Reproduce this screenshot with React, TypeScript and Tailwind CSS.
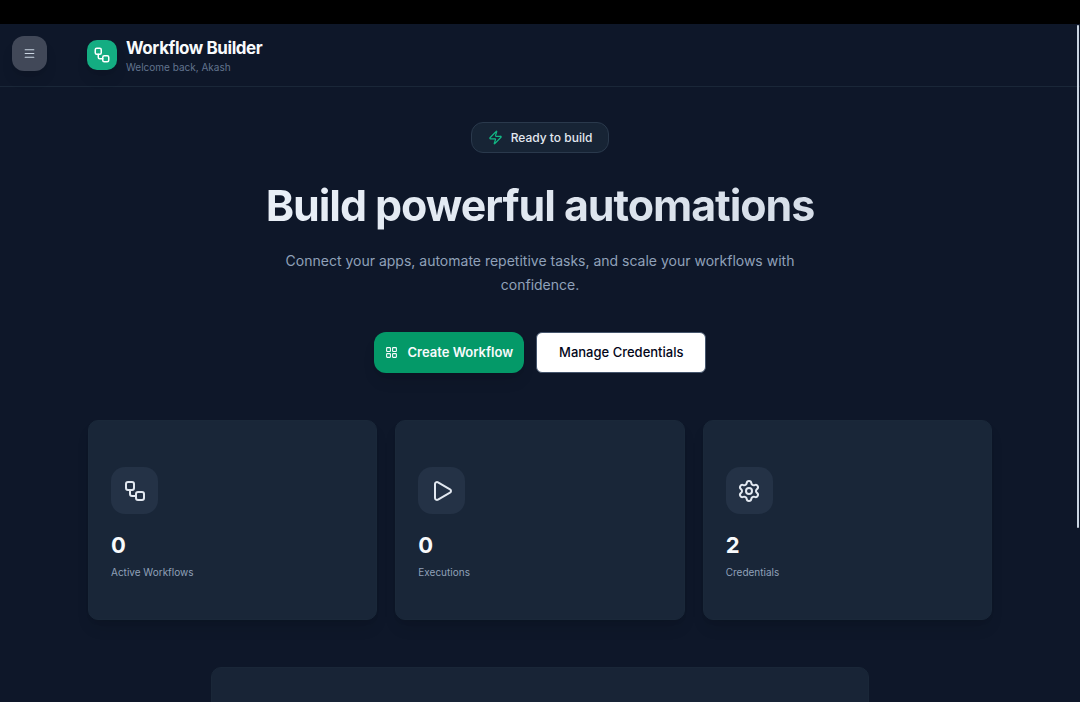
import { LayoutGrid, Menu, Play, Settings, Workflow, Zap } from "lucide-react";
import type { LucideIcon } from "lucide-react";

type Stat = {
  label: string;
  value: number;
  icon: LucideIcon;
};

const stats: Stat[] = [
  { label: "Active Workflows", value: 0, icon: Workflow },
  { label: "Executions", value: 0, icon: Play },
  { label: "Credentials", value: 2, icon: Settings },
];

function StatCard({ stat }: { stat: Stat }) {
  const Icon = stat.icon;

  return (
    <li className="rounded-[10px] border border-[#1a2839] bg-[#192638] px-[22px] pt-[46px] pb-[39px] shadow-lg">
      <div className="flex size-[47px] items-center justify-center rounded-[14px] bg-[#243246] text-slate-200">
        <Icon size={24} aria-hidden="true" />
      </div>
      <p className="mt-[17px] text-[22px] leading-7 font-bold text-slate-50">{stat.value}</p>
      <p className="mt-[5px] text-[10px] leading-4 text-slate-400">{stat.label}</p>
    </li>
  );
}

function Header() {
  return (
    <header className="flex h-[63px] shrink-0 items-start border-b border-[#1a2738] pt-3 pr-[88px] pl-3">
      <button
        type="button"
        aria-label="Open menu"
        className="flex size-[35px] cursor-pointer items-center justify-center rounded-xl bg-[#414858] text-slate-300 shadow-lg"
      >
        <Menu size={13} aria-hidden="true" />
      </button>
      <div className="ml-10 flex items-center gap-[9px]">
        <div className="flex size-[30px] items-center justify-center rounded-[10px] bg-[#14ad82] text-white shadow-lg">
          <Workflow size={18} aria-hidden="true" />
        </div>
        <div>
          <p className="text-[17px] leading-6 font-bold tracking-tight text-slate-50">Workflow Builder</p>
          <p className="text-[10px] leading-[14px] text-slate-500">Welcome back, Akash</p>
        </div>
      </div>
    </header>
  );
}

function Hero() {
  return (
    <section className="flex flex-col items-center text-center" aria-labelledby="hero-title">
      <div className="flex h-[31px] items-center gap-2 rounded-xl border border-[#2a394c] bg-[#172435] px-4 text-[12px] font-medium text-slate-200">
        <Zap size={15} className="text-[#12b985]" aria-hidden="true" />
        Ready to build
      </div>
      <h1
        id="hero-title"
        className="mt-6 bg-linear-to-r from-[#e9eff7] to-[#d6dee8] bg-clip-text text-[43px] leading-[56px] font-bold tracking-tight text-transparent"
      >
        Build powerful automations
      </h1>
      <p className="mt-4 max-w-[530px] text-[14px] leading-6 text-slate-400">
        Connect your apps, automate repetitive tasks, and scale your workflows with confidence.
      </p>
      <div className="mt-[35px] flex gap-3">
        <button
          type="button"
          className="flex h-[41px] cursor-pointer items-center gap-[10px] rounded-xl bg-[#049968] px-[11px] text-[13px] font-semibold text-slate-50 shadow-lg"
        >
          <LayoutGrid size={13} aria-hidden="true" />
          Create Workflow
        </button>
        <button
          type="button"
          className="h-[41px] cursor-pointer rounded-md border border-slate-600 bg-white px-[22px] text-[13px] font-medium text-slate-950"
        >
          Manage Credentials
        </button>
      </div>
    </section>
  );
}

export default function App() {
  return (
    <div className="relative flex h-screen flex-col overflow-hidden bg-[#0e1729] font-['Inter','Liberation_Sans',sans-serif]">
      <div className="h-6 shrink-0 bg-black" />
      <Header />
      <main className="min-h-0 flex-1 overflow-hidden px-[88px] pt-[35px]">
        <Hero />
        <ul className="mt-[47px] grid grid-cols-3 gap-[18px]">
          {stats.map((stat) => (
            <StatCard key={stat.label} stat={stat} />
          ))}
        </ul>
        <section
          aria-label="Getting started"
          className="mx-auto mt-[47px] h-[220px] max-w-[658px] rounded-[10px] border border-[#1a2738] bg-[#182436]"
        />
      </main>

      {/* Scroll thumb */}
      <div className="absolute top-[25px] right-px h-[503px] w-0.5 rounded-full bg-slate-300" />
    </div>
  );
}
